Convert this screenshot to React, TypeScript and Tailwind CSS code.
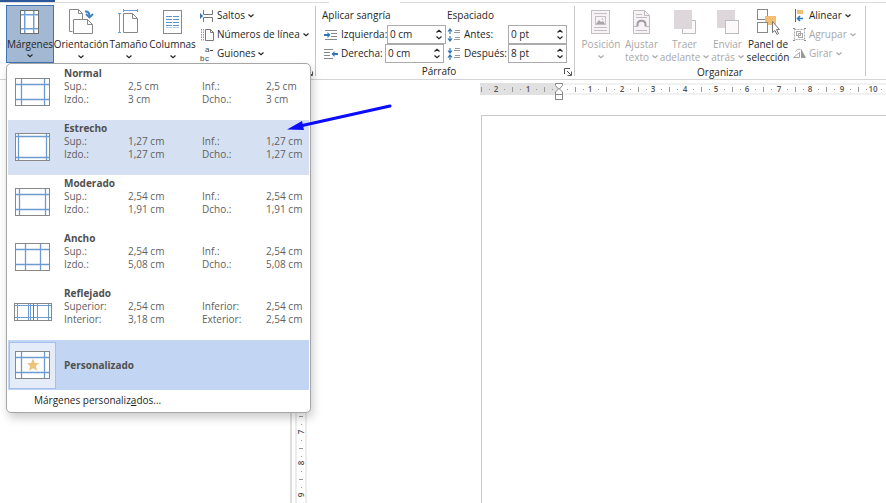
import clsx from "clsx";
import { type ReactNode, useEffect, useState } from "react";

type MarginPreset = {
  name: string;
  rows: [string, string, string, string][];
  icon: ReactNode;
};

const CM = 31.4;

function useWindowSize() {
  const [size, setSize] = useState({ width: window.innerWidth, height: window.innerHeight });

  useEffect(() => {
    function onResize() {
      setSize({ width: window.innerWidth, height: window.innerHeight });
    }
    window.addEventListener("resize", onResize);
    return () => window.removeEventListener("resize", onResize);
  }, []);

  return size;
}

function Chevron() {
  return (
    <svg width="6" height="4" viewBox="0 0 6 4" fill="none" stroke="currentColor" className="shrink-0">
      <path d="M.5 .5L3 2.800 5.500 .5" strokeWidth="1.200" />
    </svg>
  );
}

/* Ribbon icons */

function MarginsIcon() {
  return (
    <svg width="22" height="26" viewBox="0 0 22 26" fill="none">
      <rect x="1.500" y="1.500" width="18" height="23" fill="#fff" stroke="#6e6e6e" />
      <path d="M6.500 2v22M15.500 2v22M2 6.500h17M2 20.500h17" stroke="#b9d2ec" />
      <path d="M5.500 2v22M14.500 2v22M2 5.500h17M2 19.500h17" stroke="#6f9fd2" />
    </svg>
  );
}

function OrientationIcon() {
  return (
    <svg width="26" height="26" viewBox="0 0 26 26" fill="none">
      <path d="M4.500 22.500h-3V.5h9l4 4V10" fill="#fff" stroke="#888" />
      <path d="M10.500 .5v4h4" stroke="#888" />
      <path d="M5.500 10.500h14l5 5v9h-19z" fill="#fff" stroke="#888" />
      <path d="M19.500 10.500v5h5" stroke="#888" />
      <path d="M17 2.500c3-.5 4.500 1.500 4.500 5" stroke="#3f80c0" strokeWidth="2" />
      <path d="M18 5l3.500 3.500L25 5" stroke="#3f80c0" strokeWidth="1.800" />
    </svg>
  );
}

function SizeIcon() {
  return (
    <svg width="22" height="26" viewBox="0 0 22 26" fill="none">
      <path d="M5.500 4.500h9l5 5v14h-14z" fill="#fff" stroke="#888" />
      <path d="M14.500 4.500v5h5" stroke="#888" />
      <path d="M5 1.500h15M5.500 0v3M19.500 0v3M1.500 5v18M0 4.500h3M0 23.500h3" stroke="#6f9fd2" />
    </svg>
  );
}

function ColumnsIcon() {
  return (
    <svg width="20" height="26" viewBox="0 0 20 26" fill="none">
      <rect x=".5" y="1.500" width="18" height="23" fill="#fff" stroke="#888" />
      <path d="M3 7.500h6M3 10.500h6M3 13.500h6M3 16.500h6M10 7.500h6M10 10.500h6M10 13.500h6M10 16.500h6" stroke="#5b93cf" />
      <path d="M3 18.500h6M10 18.500h6" stroke="#b9d2ec" />
    </svg>
  );
}

function BreaksIcon() {
  return (
    <svg width="14" height="14" viewBox="0 0 14 14" fill="none">
      <path d="M3.500 1v4.500h9V1M3.500 13V8.500h9V13" stroke="#777" />
      <path d="M0 4l3 3-3 3z" fill="#2e75b6" />
    </svg>
  );
}

function LineNumbersIcon() {
  return (
    <svg width="14" height="14" viewBox="0 0 14 14" fill="none">
      <path d="M1.500 1v12M3.500 1v12" stroke="#6f9fd2" strokeDasharray="1.500 1" />
      <path d="M5.500 1.500h5l3 3v8h-8z" fill="#fff" stroke="#777" />
      <path d="M10.500 1.500v3h3" stroke="#777" />
    </svg>
  );
}

function HyphenIcon() {
  return (
    <svg
      width="14"
      height="14"
      viewBox="0 0 14 14"
      fill="#444"
      className="overflow-visible font-['Liberation_Sans',sans-serif] text-[8px]"
    >
      <text x="0" y="14">
        b
      </text>
      <text x="5" y="5">
        a
      </text>
      <text x="5" y="14">
        c
      </text>
      <path d="M10 3.500h3" stroke="#444" />
    </svg>
  );
}

function IndentIcon({ side }: { side: "left" | "right" }) {
  return side === "left" ? (
    <svg width="14" height="12" viewBox="0 0 14 12" fill="none">
      <path d="M1 1.500h12M7 4.500h6M7 7.500h6M1 10.500h12" stroke="#888" />
      <path d="M0 6h5" stroke="#2e75b6" strokeWidth="2" />
      <path d="M3.500 3v6l3-3z" fill="#2e75b6" />
    </svg>
  ) : (
    <svg width="14" height="12" viewBox="0 0 14 12" fill="none">
      <path d="M0 1.500h9M0 4.500h6M0 7.500h6M0 10.500h9" stroke="#888" />
      <path d="M9 6h5" stroke="#2e75b6" strokeWidth="2" />
      <path d="M10.500 3v6l-3-3z" fill="#2e75b6" />
    </svg>
  );
}

function SpacingIcon({ side }: { side: "before" | "after" }) {
  return side === "before" ? (
    <svg width="14" height="14" viewBox="0 0 14 14" fill="none">
      <path d="M8 2.500h5M7 4.500h6M8 9.500h5M7 11.500h6" stroke="#999" />
      <path d="M3 6V1M1 3.500l2-2.500 2 2.500M3 8v5M1 10.500l2 2.500 2-2.500" stroke="#2e75b6" strokeWidth="1.200" />
    </svg>
  ) : (
    <svg width="14" height="14" viewBox="0 0 14 14" fill="none">
      <path d="M8 1.500h5M7 3.500h6M8 8.500h5M7 10.500h6" stroke="#999" />
      <path d="M3 1v5M1 3.500l2 2.500 2-2.500M3 13V8M1 10.500l2-2.500 2 2.500" stroke="#2e75b6" strokeWidth="1.200" />
    </svg>
  );
}

function PositionIcon() {
  return (
    <svg width="20" height="26" viewBox="0 0 20 26" fill="none" stroke="#c4bfc2">
      <rect x=".5" y="1.500" width="18" height="23" fill="#f6f2f5" />
      <path d="M3 4.500h13M3 18.500h13M3 21.500h13" />
      <rect x="4.500" y="7.500" width="10" height="8" fill="#f6f2f5" />
      <path d="M5 15l3-4 2 2 2-1 2 3z" fill="#a9a4a7" stroke="none" />
      <circle cx="11.500" cy="10" r=".5" />
    </svg>
  );
}

function WrapIcon() {
  return (
    <svg width="20" height="26" viewBox="0 0 20 26" fill="none" stroke="#c0bbbe">
      <path d="M1.500 1.500h11l5 5v18h-16z" fill="#f6f2f5" />
      <path d="M12.500 1.500v5h5M4 5.500h6M4 8.500h11M2 17.500h3M14 17.500h3M4 21.500h11" />
      <path d="M5.500 17.500v-2c0-5 8-5 8 0v2" stroke="#a19ca0" strokeWidth="2" />
    </svg>
  );
}

function ForwardIcon() {
  return (
    <svg width="24" height="26" viewBox="0 0 24 26" fill="none">
      <path d="M19 11.500h3.500v13h-13V20" fill="#fbf9fa" stroke="#c0bbbe" />
      <rect x="1" y="1" width="18" height="19" fill="#ddd6db" />
    </svg>
  );
}

function BackwardIcon() {
  return (
    <svg width="24" height="26" viewBox="0 0 24 26" fill="none">
      <rect x="1" y="1" width="18" height="18" fill="#ddd6db" />
      <rect x="9.500" y="11.500" width="13" height="13" fill="#fbf9fa" stroke="#c0bbbe" />
    </svg>
  );
}

function SelectionIcon() {
  return (
    <svg width="24" height="26" viewBox="0 0 24 26" fill="none">
      <rect x="1.500" y=".5" width="10" height="10" fill="#fff" stroke="#888" />
      <path d="M9 7h11v9H9z" fill="#f0bf74" />
      <rect x="1.500" y="13.500" width="10" height="10" fill="#fff" stroke="#888" />
      <path d="M16.500 12.500v11l2.500-2 2 4 1.500-1-2-4h3z" fill="#fff" stroke="#777" />
    </svg>
  );
}

function AlignIcon() {
  return (
    <svg width="13" height="13" viewBox="0 0 13 13" fill="none">
      <path d="M2.500 0v13" stroke="#666" />
      <path d="M4 1h6v4H4z" fill="#f0bf74" />
      <path d="M10 9.500H5M7 7L4.500 9.500 7 12" stroke="#2e75b6" strokeWidth="1.500" />
    </svg>
  );
}

function GroupIcon() {
  return (
    <svg width="13" height="13" viewBox="0 0 13 13" fill="none" stroke="#aaa">
      <path d="M1.500 1.500h10v10h-10z" strokeDasharray="2 1" />
      <rect x="3.500" y="3.500" width="4" height="4" />
      <rect x="5.500" y="5.500" width="4" height="4" />
      <path d="M0 .5h2M11 .5h2M0 12.500h2M11 12.500h2" stroke="#888" />
    </svg>
  );
}

function RotateIcon() {
  return (
    <svg width="13" height="13" viewBox="0 0 13 13" fill="none">
      <path d="M.5 10.500l6-5v5zM2.500 4.500c1-2 3-3 5-2" stroke="#aaa" />
      <path d="M8 1.500v9.500h5z" fill="#999" />
    </svg>
  );
}

/* Thumbnails in the margins menu */

function PageThumb({ x1, x2, y1, y2, star }: { x1: number; x2: number; y1: number; y2: number; star?: boolean }) {
  return (
    <svg width="36" height="28" viewBox="0 0 36 28" fill="none">
      <rect x=".5" y=".5" width="34" height="27" fill="#fff" stroke="#888" />
      <path d={`M${x1}.5 1v26M${x2}.5 1v26M1 ${y1}.5h33M1 ${y2}.5h33`} stroke="#6d9bcf" strokeWidth="1.300" />
      {star && (
        <path
          d="M18 7.500l1.800 4.400 4.500.3-3.500 2.900 1.200 4.600-4-2.500-4 2.500 1.200-4.600-3.500-2.900 4.500-.3z"
          fill="#edc27c"
        />
      )}
    </svg>
  );
}

function MirroredThumb() {
  return (
    <svg width="38" height="18" viewBox="0 0 38 18" fill="none">
      <rect x=".5" y=".5" width="37" height="17" fill="#fff" stroke="#888" />
      <path d="M3.500 1v16M14.500 1v16M23.500 1v16M34.500 1v16M1 2.500h36M1 14.500h36M16.500 1v16" stroke="#6d9bcf" />
      <path d="M19.500 1v16" stroke="#777" />
    </svg>
  );
}

const PRESETS: MarginPreset[] = [
  {
    name: "Normal",
    rows: [
      ["Sup.:", "2,5 cm", "Inf.:", "2,5 cm"],
      ["Izdo.:", "3 cm", "Dcho.:", "3 cm"],
    ],
    icon: <PageThumb x1={6} x2={29} y1={6} y2={21} />,
  },
  {
    name: "Estrecho",
    rows: [
      ["Sup.:", "1,27 cm", "Inf.:", "1,27 cm"],
      ["Izdo.:", "1,27 cm", "Dcho.:", "1,27 cm"],
    ],
    icon: <PageThumb x1={3} x2={31} y1={3} y2={24} />,
  },
  {
    name: "Moderado",
    rows: [
      ["Sup.:", "2,54 cm", "Inf.:", "2,54 cm"],
      ["Izdo.:", "1,91 cm", "Dcho.:", "1,91 cm"],
    ],
    icon: <PageThumb x1={4} x2={30} y1={6} y2={21} />,
  },
  {
    name: "Ancho",
    rows: [
      ["Sup.:", "2,54 cm", "Inf.:", "2,54 cm"],
      ["Izdo.:", "5,08 cm", "Dcho.:", "5,08 cm"],
    ],
    icon: <PageThumb x1={10} x2={25} y1={6} y2={21} />,
  },
  {
    name: "Reflejado",
    rows: [
      ["Superior:", "2,54 cm", "Inferior:", "2,54 cm"],
      ["Interior:", "3,18 cm", "Exterior:", "2,54 cm"],
    ],
    icon: <MirroredThumb />,
  },
];

function MarginsMenu() {
  const [hovered, setHovered] = useState("Estrecho");

  return (
    <div
      role="menu"
      className="absolute top-full left-0 z-10 w-[305px] rounded-[5px] border border-[#a6a6a6] bg-white p-px text-left shadow-[2px_5px_10px_rgba(0,0,0,0.2)]"
    >
      {PRESETS.map((preset) => (
        <button
          key={preset.name}
          type="button"
          role="menuitem"
          onMouseEnter={() => setHovered(preset.name)}
          className={clsx(
            "flex h-[55px] w-full gap-1.5 text-left text-[#5f5f5f]",
            hovered === preset.name && "bg-[#d5e1f2]",
          )}
        >
          <span className="flex h-full w-[50px] shrink-0 items-center justify-center pb-0.5">{preset.icon}</span>
          <span className="flex flex-col pt-0.5">
            <span className="leading-[13px] font-bold text-[#505050]">{preset.name}</span>
            {preset.rows.map((row) => (
              <span key={row[0]} className="grid grid-cols-[64px_74px_64px_38px] leading-[13px] whitespace-nowrap">
                {row.map((cell, i) => (
                  <span key={i}>{cell}</span>
                ))}
              </span>
            ))}
          </span>
        </button>
      ))}
      <button
        type="button"
        role="menuitem"
        className="flex h-[50px] w-full items-center gap-2 bg-[#c2d5f2] px-px text-left"
      >
        <span className="flex size-[47px] shrink-0 items-center justify-center border border-[#a3bfec] bg-[#e4ecf9]">
          <PageThumb x1={6} x2={29} y1={6} y2={21} star />
        </span>
        <span className="font-bold text-[#505050]">Personalizado</span>
      </button>
      <button type="button" role="menuitem" className="h-[21px] w-full pl-[26px] text-left text-[#262626]">
        Márgenes personaliz<u>a</u>dos...
      </button>
    </div>
  );
}

function BigButton({
  icon,
  label,
  second,
  width,
  disabled,
  chevron = true,
}: {
  icon: ReactNode;
  label: string;
  second?: string;
  width: string;
  disabled?: boolean;
  chevron?: boolean;
}) {
  return (
    <button
      type="button"
      disabled={disabled}
      className={clsx("flex h-[58px] flex-col items-center whitespace-nowrap", width, disabled && "text-[#a8a8a8]")}
    >
      <span className="flex h-8 items-center">{icon}</span>
      <span className="leading-3">{label}</span>
      <span className="flex h-[14px] items-center gap-[3px]">
        {second}
        {chevron && <Chevron />}
      </span>
    </button>
  );
}

function SmallButton({ icon, label, disabled }: { icon: ReactNode; label: string; disabled?: boolean }) {
  return (
    <button
      type="button"
      disabled={disabled}
      className={clsx("flex h-[19px] items-center gap-[3px] whitespace-nowrap", disabled && "text-[#a8a8a8]")}
    >
      {icon}
      {label}
      <Chevron />
    </button>
  );
}

function SpinField({
  id,
  label,
  labelWidth = "w-[41px]",
  icon,
  initial,
}: {
  id: string;
  label: string;
  labelWidth?: string;
  icon: ReactNode;
  initial: string;
}) {
  const [value, setValue] = useState(initial);

  function step(delta: number) {
    setValue((current) => {
      const [amount, unit] = current.split(" ");
      return `${Math.max(0, Number(amount) + delta)} ${unit}`;
    });
  }

  return (
    <div className="flex h-[19px] items-center gap-[3px]">
      {icon}
      <label htmlFor={id} className={clsx("whitespace-nowrap", labelWidth)}>
        {label}
      </label>
      <div className="flex h-[19px] w-[59px] border border-[#ababab] bg-white">
        <input
          id={id}
          value={value}
          onChange={(event) => setValue(event.target.value)}
          className="w-[45px] min-w-0 pl-0.5 outline-none"
        />
        <div className="flex w-3 flex-col items-center justify-evenly">
          <button type="button" aria-label="Aumentar" onClick={() => step(1)} className="rotate-180">
            <Chevron />
          </button>
          <button type="button" aria-label="Disminuir" onClick={() => step(-1)}>
            <Chevron />
          </button>
        </div>
      </div>
    </div>
  );
}

function Launcher() {
  return (
    <button type="button" aria-label="Más opciones" className="absolute right-0.5 bottom-0">
      <svg width="8" height="8" viewBox="0 0 8 8" fill="none" stroke="#555">
        <path d="M.5 6V.5H6M3 3l4 4M7.500 3.500v4h-4" />
      </svg>
    </button>
  );
}

function RibbonGroup({
  title,
  width,
  launcher,
  children,
}: {
  title: string;
  width: string;
  launcher?: boolean;
  children: ReactNode;
}) {
  return (
    <section className={clsx("relative my-[3px] flex shrink-0 flex-col border-r border-[#c8c8c8]", width)}>
      <div className="flex h-[60px]">{children}</div>
      <div className={clsx("pt-0.5 text-center leading-3", launcher && "pr-3")}>{title}</div>
      {launcher && <Launcher />}
    </section>
  );
}

function Ribbon() {
  return (
    <header className="shrink-0">
      <div className="flex h-[3px]">
        <div className="w-[329px] border-b border-[#dcdcdc]">
          <div className="h-0.5 w-[55px] bg-[#2b579a]" />
        </div>
        <div className="w-[71px]" />
        <div className="flex-1 border-b border-[#dcdcdc]" />
      </div>
      <div className="flex h-[77px] border-b border-[#d4d4d4]">
        <RibbonGroup title="" width="w-[316px]" launcher>
          <div className="relative -mt-px ml-1.5 h-[58px]">
            <button
              type="button"
              aria-haspopup="menu"
              aria-expanded="true"
              className="flex h-[58px] w-12 flex-col items-center border border-[#3f74b5] bg-[#a3b8d3]"
            >
              <span className="flex h-8 items-center">
                <MarginsIcon />
              </span>
              <span className="leading-3">Márgenes</span>
              <span className="flex h-3 items-center">
                <Chevron />
              </span>
            </button>
            <MarginsMenu />
          </div>
          <BigButton width="w-[54px]" icon={<OrientationIcon />} label="Orientación" />
          <BigButton width="w-[41px]" icon={<SizeIcon />} label="Tamaño" />
          <BigButton width="w-[47px]" icon={<ColumnsIcon />} label="Columnas" />
          <div className="ml-1 flex flex-col">
            <SmallButton icon={<BreaksIcon />} label="Saltos" />
            <SmallButton icon={<LineNumbersIcon />} label="Números de línea" />
            <SmallButton icon={<HyphenIcon />} label="Guiones" />
          </div>
        </RibbonGroup>
        <RibbonGroup title="Párrafo" width="w-[259px]" launcher>
          <div className="ml-1.5 flex w-[125px] flex-col">
            <div className="h-[19px] leading-[19px]">Aplicar sangría</div>
            <div className="pl-0.5">
              <SpinField
                id="indent-left"
                label="Izquierda:"
                labelWidth="w-[43px]"
                icon={<IndentIcon side="left" />}
                initial="0 cm"
              />
              <SpinField id="indent-right" label="Derecha:" icon={<IndentIcon side="right" />} initial="0 cm" />
            </div>
          </div>
          <div className="flex flex-col">
            <div className="h-[19px] leading-[19px]">Espaciado</div>
            <SpinField id="space-before" label="Antes:" icon={<SpacingIcon side="before" />} initial="0 pt" />
            <SpinField id="space-after" label="Después:" icon={<SpacingIcon side="after" />} initial="8 pt" />
          </div>
        </RibbonGroup>
        <RibbonGroup title="Organizar" width="w-[291px]">
          <BigButton width="ml-1 w-[44px]" disabled icon={<PositionIcon />} label="Posición" />
          <BigButton width="w-[37px]" disabled icon={<WrapIcon />} label="Ajustar" second="texto" />
          <BigButton width="w-[49px]" disabled icon={<ForwardIcon />} label="Traer" second="adelante" />
          <BigButton width="w-[37px]" disabled icon={<BackwardIcon />} label="Enviar" second="atrás" />
          <BigButton width="w-[44px]" icon={<SelectionIcon />} label="Panel de" second="selección" chevron={false} />
          <div className="ml-[3px] flex flex-col">
            <SmallButton icon={<AlignIcon />} label="Alinear" />
            <SmallButton icon={<GroupIcon />} label="Agrupar" disabled />
            <SmallButton icon={<RotateIcon />} label="Girar" disabled />
          </div>
        </RibbonGroup>
      </div>
    </header>
  );
}

// Offsets inside one centimetre: a dot, the half mark, another dot.
const TICKS = [0.25, 0.5, 0.75];

function HorizontalRuler({ length }: { length: number }) {
  const origin = 79;
  const last = Math.floor((length - origin - 8) / CM);
  const marks = Array.from({ length: last + 4 }, (_, i) => i - 3);

  return (
    <svg height="20" className="block w-full text-[8px] font-semibold">
      <rect x="0" y="0" width="100%" height="12" fill="#f1f1f1" />
      <rect x={origin} y="2" width="100%" height="8" fill="#fff" />
      <rect x="0" y="0" width={origin} height="12" fill="#e1e1e1" />
      {marks.map((n) => {
        const x = Math.round(origin + n * CM);
        return (
          <g key={n}>
            {n !== 0 && x > 0 && (
              <text x={x} y="9" textAnchor="middle" fill="#555">
                {Math.abs(n)}
              </text>
            )}
            {TICKS.map((t) => (
              <rect
                key={t}
                x={Math.round(x + t * CM)}
                y={t === 0.5 ? 4 : 6}
                width="1"
                height={t === 0.5 ? 5 : 1}
                fill="#999"
              />
            ))}
          </g>
        );
      })}
      <g fill="#fff" stroke="#888">
        <path d="M75.500 .5h7v2l-3.500 4-3.500-4z" />
        <path d="M79 5.500l3.500 3.500v2.500h-7V9z" />
        <rect x="75.500" y="11.500" width="7" height="5" />
      </g>
    </svg>
  );
}

function VerticalRuler({ length }: { length: number }) {
  const origin = 132;
  const last = Math.floor((length - origin - 4) / CM);
  const marks = Array.from({ length: last + 1 }, (_, i) => i);

  return (
    <svg width="12" height="100%" className="block text-[8px] font-semibold">
      <rect x="0" y="0" width="12" height="100%" fill="#ececec" />
      <rect x="2" y="0" width="8" height="100%" fill="#fff" />
      {marks.map((n) => {
        const y = Math.round(origin + n * CM);
        return (
          <g key={n}>
            {n > 0 && (
              <text transform={`translate(9 ${y}) rotate(-90)`} textAnchor="middle" fill="#555">
                {n}
              </text>
            )}
            {TICKS.map((t) => (
              <rect
                key={t}
                x={t === 0.5 ? 4 : 6}
                y={Math.round(y + t * CM)}
                width={t === 0.5 ? 4 : 1}
                height="1"
                fill="#999"
              />
            ))}
          </g>
        );
      })}
    </svg>
  );
}

function Pointer() {
  return (
    <svg
      width="106"
      height="30"
      viewBox="0 0 106 30"
      className="pointer-events-none absolute top-[102px] left-[286px] z-20"
    >
      <path d="M104 4L14 24" stroke="#0b0bff" strokeWidth="3" strokeLinecap="round" />
      <path d="M1 27.500L16 19l2 9z" fill="#0b0bff" />
    </svg>
  );
}

export default function App() {
  const { width, height } = useWindowSize();

  return (
    <div className="relative flex h-screen flex-col overflow-hidden bg-white font-['Open_Sans','Noto_Sans',sans-serif] text-[10px] text-[#262626]">
      <Ribbon />
      <div className="flex min-h-0 flex-1">
        <aside className="w-[292px] shrink-0 border-r-2 border-[#dedede]" />
        <div className="ml-[3px] shrink-0">
          <VerticalRuler length={height - 80} />
        </div>
        <main className="flex min-w-0 flex-1 flex-col pt-[3px] pl-[173px]">
          <HorizontalRuler length={width - 480} />
          <div className="mt-3 ml-px flex-1 border-t border-l border-[#c9c9c9] bg-white" />
        </main>
      </div>
      <Pointer />
    </div>
  );
}
